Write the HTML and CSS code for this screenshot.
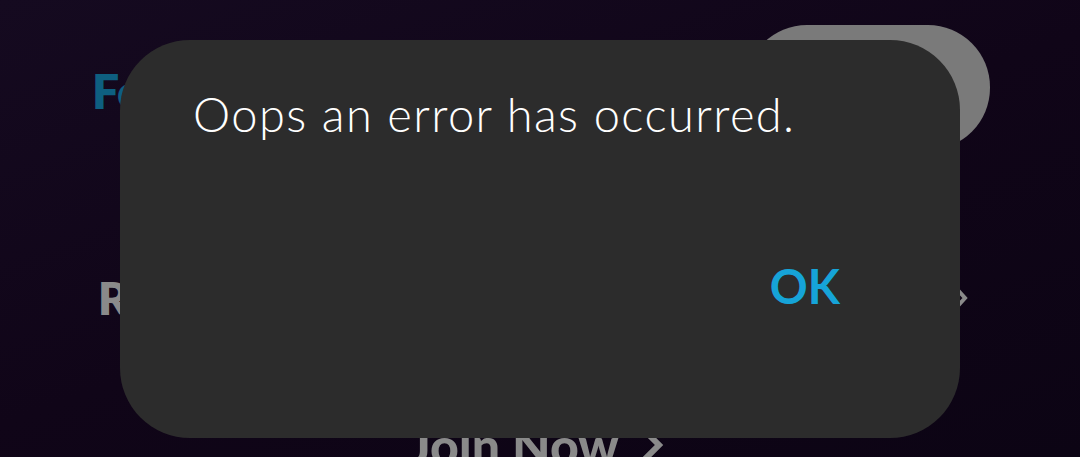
FILE: index.html
```html
<!DOCTYPE html>
<html>
<head>
<meta charset="utf-8">
<link rel="stylesheet" href="styles.css">
</head>
<body>
<div class="page">
  <div class="header">
    <h1 class="title">For You</h1>
    <div class="pill"></div>
  </div>
  <div class="row">
    <span class="row-label">Recently Played</span>
    <svg class="chev" width="14" height="24" viewBox="0 0 14 24"><path d="M2 2 L11 12 L2 22" fill="none" stroke="#8a8a8a" stroke-width="4"/></svg>
  </div>
  <div class="join">
    <span>Join Now</span>
    <svg class="chev-lg" width="30" height="40" viewBox="0 0 30 40"><path d="M6 4 L22 20 L6 36" fill="none" stroke="#8a8a8a" stroke-width="6"/></svg>
  </div>
</div>
<div class="dialog">
  <p class="message">Oops an error has occurred.</p>
  <div class="actions"><span class="ok">OK</span></div>
</div>
</body>
</html>
```
FILE: styles.css
```css
html, body {
  margin: 0;
  padding: 0;
  width: 1080px;
  height: 457px;
  overflow: hidden;
}
body {
  background: linear-gradient(160deg, #150a20 0%, #100518 50%, #0c0414 100%);
  font-family: Lato, "Liberation Sans", sans-serif;
  position: relative;
}
.page {
  display: flex;
  flex-direction: column;
  padding: 25px 90px 0 92px;
}
.header {
  display: flex;
  justify-content: space-between;
  align-items: center;
  height: 125px;
}
.title {
  margin: 0;
  font-size: 48px;
  font-weight: 800;
  color: #0e5f80;
  margin-top: 6px;
}
.pill {
  width: 245px;
  height: 125px;
  border-radius: 62px;
  background: #7a7a7a;
}
.row {
  display: flex;
  justify-content: space-between;
  align-items: center;
  margin-top: 120px;
  padding-left: 6px;
  padding-right: 22px;
}
.row-label {
  font-size: 46px;
  font-weight: 800;
  color: #8a8a8a;
}
.join {
  display: flex;
  justify-content: center;
  align-items: center;
  gap: 18px;
  margin-top: 90px;
  padding-right: 6px;
  font-size: 50px;
  font-weight: 900;
  color: #8a8a8a;
}
.dialog {
  position: absolute;
  left: 120px;
  top: 40px;
  width: 840px;
  height: 398px;
  border-radius: 70px;
  background: #2c2c2c;
  box-sizing: border-box;
  padding: 0 120px 0 73px;
  display: flex;
  flex-direction: column;
}
.message {
  margin: 42px 0 0;
  font-size: 47px;
  font-weight: 300;
  letter-spacing: 1.4px;
  color: #ffffff;
  line-height: 64px;
}
.actions {
  display: flex;
  justify-content: flex-end;
  margin-top: 112px;
}
.ok {
  font-size: 47px;
  font-weight: 700;
  color: #16a4d8;
  line-height: 56px;
}
```
